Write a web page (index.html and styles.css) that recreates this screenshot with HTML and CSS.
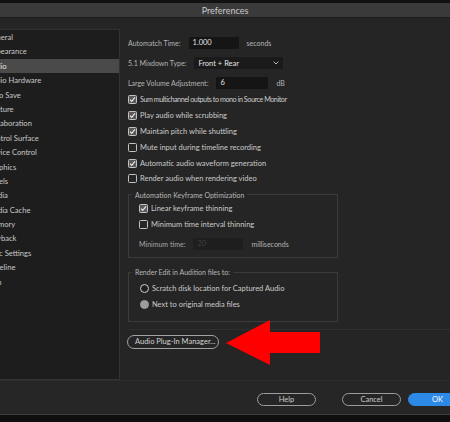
FILE: index.html
```html
<!DOCTYPE html>
<html>
<head>
<meta charset="utf-8">
<title>Preferences</title>
<link rel="stylesheet" href="styles.css">
</head>
<body>
<div class="window">
  <div class="topstrip"></div>
  <div class="titlebar">Preferences</div>
  <div class="main">
    <ul class="sidebar">
      <li>General</li>
      <li>Appearance</li>
      <li class="selected">Audio</li>
      <li>Audio Hardware</li>
      <li>Auto Save</li>
      <li>Capture</li>
      <li>Collaboration</li>
      <li>Control Surface</li>
      <li>Device Control</li>
      <li>Graphics</li>
      <li>Labels</li>
      <li>Media</li>
      <li>Media Cache</li>
      <li>Memory</li>
      <li>Playback</li>
      <li>Sync Settings</li>
      <li>Timeline</li>
      <li>Trim</li>
    </ul>
    <div class="content">
      <div class="field-row">
        <span class="label">Automatch Time:</span>
        <span class="input w-auto">1.000</span>
        <span class="unit">seconds</span>
      </div>
      <div class="field-row">
        <span class="label">5.1 Mixdown Type:</span>
        <span class="select">Front + Rear
          <svg class="chev" viewBox="0 0 6 4" width="6" height="4"><polyline points="0.6,0.6 3,3 5.4,0.6" fill="none" stroke="#c8c8c8" stroke-width="0.9"/></svg>
        </span>
      </div>
      <div class="field-row last">
        <span class="label">Large Volume Adjustment:</span>
        <span class="input w-vol">6</span>
        <span class="unit">dB</span>
      </div>
      <div class="check-row"><span class="cb on"><svg viewBox="0 0 8 8" width="7" height="7"><polyline points="1.2,4.2 3.1,6.1 6.9,1.6" fill="none" stroke="#ececec" stroke-width="1.3"/></svg></span><span class="tight">Sum multichannel outputs to mono in Source Monitor</span></div>
      <div class="check-row"><span class="cb on"><svg viewBox="0 0 8 8" width="7" height="7"><polyline points="1.2,4.2 3.1,6.1 6.9,1.6" fill="none" stroke="#ececec" stroke-width="1.3"/></svg></span><span>Play audio while scrubbing</span></div>
      <div class="check-row"><span class="cb on"><svg viewBox="0 0 8 8" width="7" height="7"><polyline points="1.2,4.2 3.1,6.1 6.9,1.6" fill="none" stroke="#ececec" stroke-width="1.3"/></svg></span><span>Maintain pitch while shuttling</span></div>
      <div class="check-row"><span class="cb"></span><span>Mute input during timeline recording</span></div>
      <div class="check-row"><span class="cb on"><svg viewBox="0 0 8 8" width="7" height="7"><polyline points="1.2,4.2 3.1,6.1 6.9,1.6" fill="none" stroke="#ececec" stroke-width="1.3"/></svg></span><span>Automatic audio waveform generation</span></div>
      <div class="check-row"><span class="cb"></span><span>Render audio when rendering video</span></div>

      <fieldset class="group group-auto">
        <legend>Automation Keyframe Optimization</legend>
        <div class="group-body">
          <div class="check-row"><span class="cb on"><svg viewBox="0 0 8 8" width="7" height="7"><polyline points="1.2,4.2 3.1,6.1 6.9,1.6" fill="none" stroke="#ececec" stroke-width="1.3"/></svg></span><span>Linear keyframe thinning</span></div>
          <div class="check-row"><span class="cb"></span><span>Minimum time interval thinning</span></div>
          <div class="field-row min-time">
            <span class="label dim">Minimum time:</span>
            <span class="input disabled">20</span>
            <span class="unit dim">milliseconds</span>
          </div>
        </div>
      </fieldset>

      <fieldset class="group group-render">
        <legend>Render Edit in Audition files to:</legend>
        <div class="group-body">
          <div class="radio-row"><span class="radio"></span><span>Scratch disk location for Captured Audio</span></div>
          <div class="radio-row"><span class="radio on"></span><span>Next to original media files</span></div>
        </div>
      </fieldset>

      <div class="separator"></div>
      <div class="pill">Audio Plug-In Manager...</div>
    </div>
  </div>
  <div class="footer">
    <div class="btn btn-help">Help</div>
    <div class="btn btn-cancel">Cancel</div>
    <div class="btn btn-ok">OK</div>
  </div>
  <div class="bottomstrip"></div>
</div>
<svg class="arrow" viewBox="0 0 450 422" width="450" height="422">
  <polygon points="226,343 270,320 270,332 320,332 320,353 270,353 270,365" fill="#ff0000"/>
</svg>
</body>
</html>
```
FILE: styles.css
```css
* { box-sizing: border-box; }

html, body {
  margin: 0;
  padding: 0;
}

body {
  width: 450px;
  height: 422px;
  overflow: hidden;
  position: relative;
  background: #0f0f0f;
  font-family: Lato, "Liberation Sans", sans-serif;
  font-size: 7.5px;
  color: #c6c6c6;
}

.window {
  display: flex;
  flex-direction: column;
  height: 422px;
}

.topstrip {
  flex: none;
  height: 3px;
  background: #111111;
}

.titlebar {
  flex: none;
  height: 15px;
  background: #3a3a3a;
  border-bottom: 1px solid #1c1c1c;
  color: #cacaca;
  font-size: 9px;
  display: flex;
  align-items: center;
  justify-content: center;
}

.main {
  flex: none;
  height: 362px;
  background: #252525;
  display: flex;
  padding-top: 11px;
}

.sidebar {
  flex: none;
  list-style: none;
  margin: 0 0 0 -40px;
  padding: 0;
  width: 160px;
  height: 351px;
  background: #1d1d1d;
  border: 1px solid #323232;
  color: #c8c8c8;
  font-size: 7.6px;
}

.sidebar li {
  height: 14.4px;
  line-height: 14.4px;
  padding-left: 26px;
  white-space: nowrap;
}

.sidebar li.selected {
  background: #4a4a4a;
  color: #e2e2e2;
}

.content {
  flex: 1;
  padding: 8px 0 0 8px;
  display: flex;
  flex-direction: column;
  align-items: flex-start;
}

.field-row {
  display: flex;
  align-items: center;
  height: 12px;
  gap: 8px;
  margin-bottom: 8px;
  white-space: nowrap;
}

.field-row.last {
  margin-bottom: 3px;
}

.label {
  color: #b4b4b4;
  font-size: 7px;
}

.dim {
  color: #a6a6a6;
}

.unit {
  color: #b4b4b4;
  font-size: 7px;
}

.input {
  height: 12px;
  line-height: 12px;
  padding-left: 4px;
  background: #151515;
  color: #e4e4e4;
}

.w-auto { width: 50px; }
.w-vol { width: 52px; }

.input.disabled {
  width: 50px;
  background: #1e1e1e;
  color: #3e3e3e;
}

.select {
  width: 89px;
  height: 12px;
  background: #1a1a1a;
  color: #e4e4e4;
  padding: 0 4px;
  display: flex;
  align-items: center;
  justify-content: space-between;
}

.check-row {
  display: flex;
  align-items: center;
  gap: 3px;
  height: 15.8px;
  color: #cbcbcb;
  white-space: nowrap;
}

.tight {
  font-size: 7.2px;
  letter-spacing: -0.45px;
}

.cb {
  width: 9px;
  height: 9px;
  border: 1px solid #c2c2c2;
  border-radius: 1.5px;
  background: #262626;
  display: flex;
  align-items: center;
  justify-content: center;
}

.cb.on {
  background: #5a5a5a;
}

.group {
  margin: 3px 0 0 0;
  padding: 0;
  width: 210px;
  min-width: 0;
  border: 1px solid #3b3b3b;
}

.group legend {
  margin-left: 3px;
  padding: 0 3px;
  line-height: 10px;
  font-size: 7px;
  color: #b8b8b8;
}

.group-body {
  padding: 1px 0 7px 10px;
}

.group-auto .min-time {
  margin: 6px 0 0 0;
}

.group-render {
  margin-top: 9px;
}

.group-render .group-body {
  padding: 4px 0 9px 11px;
}

.radio-row {
  display: flex;
  align-items: center;
  gap: 3px;
  height: 15.2px;
  color: #cbcbcb;
  white-space: nowrap;
}

.radio {
  width: 9px;
  height: 9px;
  border-radius: 50%;
  border: 1px solid #cfcfcf;
  background: #1f1f1f;
}

.radio.on {
  background: #9c9c9c;
  border-color: #9c9c9c;
}

.separator {
  align-self: stretch;
  height: 1px;
  margin-top: 7px;
  background: #2f2f2f;
}

.pill {
  margin-top: 5px;
  margin-left: -1px;
  width: 92px;
  height: 14px;
  border: 1px solid #a2a2a2;
  border-radius: 7px;
  color: #d2d2d2;
  display: flex;
  align-items: center;
  padding-left: 7px;
  white-space: nowrap;
}

.footer {
  flex: none;
  width: 467px;
  height: 35px;
  background: #262626;
  border-top: 1px solid #2e2e2e;
  border-bottom: 1px solid #3d3d3d;
  display: flex;
  justify-content: flex-end;
  align-items: flex-start;
  padding-top: 12px;
}

.btn {
  width: 59px;
  height: 13px;
  border-radius: 7px;
  border: 1px solid #9c9c9c;
  color: #cacaca;
  display: flex;
  align-items: center;
  justify-content: center;
}

.btn-help { margin-right: 26px; }
.btn-cancel { margin-right: 7px; }

.btn-ok {
  background: #2d89e6;
  border-color: #2d89e6;
  color: #ffffff;
}

.bottomstrip {
  flex: 1;
  background: #0f0f0f;
}

.arrow {
  position: absolute;
  left: 0;
  top: 0;
  pointer-events: none;
}
```
